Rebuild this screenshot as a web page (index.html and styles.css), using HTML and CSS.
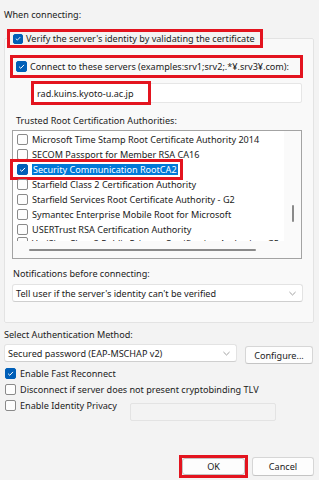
FILE: index.html
```html
<!DOCTYPE html>
<html lang="en">
<head>
<meta charset="utf-8">
<title>Protected EAP Properties</title>
<link rel="stylesheet" href="styles.css">
</head>
<body>
<div class="page">
  <div class="label top-label">When connecting:</div>
  <fieldset class="group">
    <legend class="mark legend"><span class="cb on"><svg viewBox="0 0 10 10"><path d="M2.3 5.2 L4.2 7 L7.8 3.2"/></svg></span><span>Verify the server's identity by validating the certificate</span></legend>
    <div class="mark servers"><span class="cb on"><svg viewBox="0 0 10 10"><path d="M2.3 5.2 L4.2 7 L7.8 3.2"/></svg></span><span>Connect to these servers (examples:srv1;srv2;.*¥.srv3¥.com):</span></div>
    <div class="textbox"><span class="mark-text">rad.kuins.kyoto-u.ac.jp</span></div>
    <div class="label inner-label">Trusted Root Certification Authorities:</div>
    <div class="list">
      <div class="list-body">
        <div class="rows">
          <div class="row"><span class="cb"></span><span class="item">Microsoft Time Stamp Root Certificate Authority 2014</span></div>
          <div class="row"><span class="cb"></span><span class="item">SECOM Passport for Member RSA CA16</span></div>
          <div class="row"><span class="sel-mark"><span class="cb on"><svg viewBox="0 0 10 10"><path d="M2.3 5.2 L4.2 7 L7.8 3.2"/></svg></span><span class="item selected">Security Communication RootCA2</span></span></div>
          <div class="row"><span class="cb"></span><span class="item">Starfield Class 2 Certification Authority</span></div>
          <div class="row"><span class="cb"></span><span class="item">Starfield Services Root Certificate Authority - G2</span></div>
          <div class="row"><span class="cb"></span><span class="item">Symantec Enterprise Mobile Root for Microsoft</span></div>
          <div class="row"><span class="cb"></span><span class="item">USERTrust RSA Certification Authority</span></div>
          <div class="row partial"><span class="cb"></span><span class="item">VeriSign Class 3 Public Primary Certification Authority - G5</span></div>
        </div>
        <div class="vscroll"><span class="vthumb"></span></div>
      </div>
      <div class="hscroll"><span class="hthumb"></span></div>
    </div>
    <div class="label inner-label notif">Notifications before connecting:</div>
    <div class="select notif-select"><span>Tell user if the server's identity can't be verified</span><svg class="chev" viewBox="0 0 8 5"><path d="M0.5 0.8 L4 4.2 L7.5 0.8"/></svg></div>
  </fieldset>
  <div class="label auth-label">Select Authentication Method:</div>
  <div class="auth-row">
    <div class="select auth-select"><span>Secured password (EAP-MSCHAP v2)</span><svg class="chev" viewBox="0 0 8 5"><path d="M0.5 0.8 L4 4.2 L7.5 0.8"/></svg></div>
    <button class="btn configure">Configure...</button>
  </div>
  <div class="checks">
    <div class="check"><span class="cb on"><svg viewBox="0 0 10 10"><path d="M2.3 5.2 L4.2 7 L7.8 3.2"/></svg></span><span>Enable Fast Reconnect</span></div>
    <div class="check"><span class="cb"></span><span>Disconnect if server does not present cryptobinding TLV</span></div>
    <div class="check privacy"><span class="cb"></span><span class="privacy-label">Enable Identity Privacy</span><span class="disabled-box"></span></div>
  </div>
  <div class="footer">
    <span class="ok-mark"><button class="btn ok">OK</button></span>
    <button class="btn cancel">Cancel</button>
  </div>
</div>
</body>
</html>
```
FILE: styles.css
```css
* { box-sizing: border-box; }
html, body { margin: 0; padding: 0; }
body {
  background: #f3f3f3;
  font-family: "Noto Sans", "Liberation Sans", sans-serif;
  font-size: 9.1px;
  color: #1b1b1b;
  width: 319px;
  height: 480px;
  overflow: hidden;
}
.page {
  display: flex;
  flex-direction: column;
  height: 480px;
  padding: 8px 5px 0 4px;
}
.label { line-height: 14px; height: 14px; white-space: nowrap; }

.cb {
  flex: none;
  width: 11px;
  height: 11px;
  border: 1px solid #8a8a8a;
  border-radius: 2px;
  background: #fdfdfd;
  display: inline-flex;
  align-items: center;
  justify-content: center;
}
.cb.on { background: #005fb8; border-color: #005fb8; }
.cb svg { width: 9px; height: 9px; }
.cb svg path { fill: none; stroke: #fff; stroke-width: 1.1; }

.mark { border: 3px solid #e3141f; }

.group {
  margin: 7px 0 0 0;
  padding: 0 0 20px 0;
  border: 1px solid #e3e3e3;
  border-radius: 2px;
  background: #f9f9f9;
  width: 310px;
  min-width: 0;
}
.legend {
  margin-left: 2px;
  padding: 0 5px 0 3px;
  height: 19px;
  display: flex;
  align-items: center;
  gap: 3px;
  background: #f3f3f3;
  white-space: nowrap;
}
.legend .cb { width: 10px; height: 10px; }
.servers {
  margin: 7px 10px 0 5px;
  height: 23px;
  display: flex;
  align-items: center;
  gap: 3px;
  padding-left: 3px;
  white-space: nowrap;
  overflow: hidden;
}
.textbox {
  margin: 5px 11px 0 27px;
  height: 20px;
  background: #fff;
  border: 1px solid #e6e6e6;
  border-radius: 2px;
  display: flex;
  align-items: stretch;
}
.mark-text {
  width: 114px;
  padding-left: 3px;
  display: flex;
  align-items: center;
  outline: 3px solid #e3141f;
  outline-offset: 0;
  margin: 0 0 0 1px;
  white-space: nowrap;
}
.inner-label { margin: 11px 0 0 11px; }
.list {
  margin: 2px 11px 0 7px;
  height: 129px;
  border: 1px solid #a3a3a3;
  background: #fafafa;
  display: flex;
  flex-direction: column;
}
.list-body { display: flex; height: 111px; }
.rows { flex: 1; background: #fff; padding-top: 1px; min-width: 0; }
.row {
  height: 15px;
  display: flex;
  align-items: center;
  padding-left: 4px;
  white-space: nowrap;
}
.row .cb { margin-right: 4px; }
.row.partial { height: 4px; overflow: hidden; align-items: flex-start; }
.sel-mark {
  display: flex;
  align-items: center;
  height: 15px;
  margin-left: -4px;
  padding-left: 4px;
  padding-right: 2px;
  outline: 3px solid #e3141f;
  background: #fff;
}
.item.selected {
  background: #0078d7;
  color: #fff;
  line-height: 11px;
  padding: 0 1px;
}
.vscroll {
  width: 17px;
  display: flex;
  justify-content: center;
  padding-top: 74px;
}
.vthumb { width: 2px; height: 17px; background: #8a8a8a; border-radius: 1px; }
.hscroll { height: 17px; display: flex; align-items: center; padding-left: 16px; }
.hthumb { width: 227px; height: 2px; background: #8a8a8a; border-radius: 1px; }

.notif { margin-top: 8px; margin-left: 8px; }
.select {
  height: 18px;
  background: #fff;
  border: 1px solid #e3e3e3;
  border-bottom-color: #cfcfcf;
  border-radius: 3px;
  display: flex;
  align-items: center;
  justify-content: space-between;
  padding: 0 6px 0 3px;
  white-space: nowrap;
}
.notif-select { margin: 3px 10px 0 7px; }
.chev { width: 7px; height: 5px; flex: none; }
.chev path { fill: none; stroke: #777; stroke-width: 0.8; }

.auth-label { margin-top: 5px; }
.auth-row { display: flex; align-items: flex-start; margin-top: 2px; }
.auth-select { width: 233px; padding-right: 6px; }
.btn {
  font-family: inherit;
  font-size: inherit;
  color: #1b1b1b;
  background: #fdfdfd;
  border: 1px solid #d6d6d6;
  border-bottom-color: #c4c4c4;
  border-radius: 3px;
  padding: 0;
  margin: 0;
}
.configure { margin: 2px 0 0 8px; width: 68px; height: 18px; }

.checks { margin-top: 1px; display: flex; flex-direction: column; }
.check {
  height: 16px;
  display: flex;
  align-items: center;
  gap: 4px;
  padding-left: 1px;
  white-space: nowrap;
}
.privacy-label { width: 106px; }
.disabled-box {
  width: 146px;
  height: 18px;
  border: 1px solid #e3e3e3;
  background: #f3f3f3;
  border-radius: 2px;
  margin-top: 13px;
}

.footer {
  margin-top: auto;
  margin-bottom: 2px;
  display: flex;
  justify-content: flex-end;
  align-items: center;
  gap: 4px;
}
.ok-mark { border: 3px solid #e3141f; display: flex; }
.ok { width: 63px; height: 17px; border-color: #c4c4c4; }
.cancel { width: 62px; height: 19px; }
```
